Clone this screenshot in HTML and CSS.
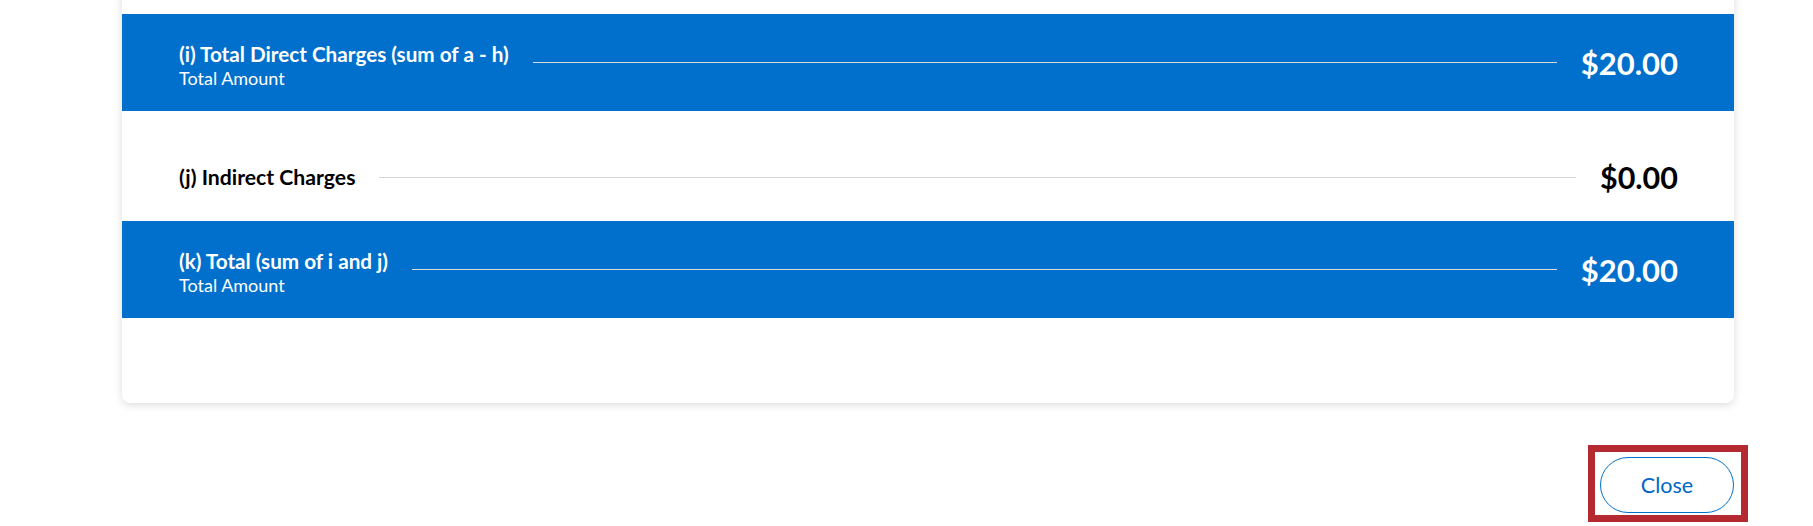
FILE: index.html
```html
<!DOCTYPE html>
<html lang="en">
<head>
<meta charset="utf-8">
<title>Budget Summary</title>
<link rel="stylesheet" href="styles.css">
</head>
<body>
<main class="page">
  <section class="card">
    <div class="row row-total">
      <div class="label">
        <div class="title">(i) Total Direct Charges (sum of a - h)</div>
        <div class="sub">Total Amount</div>
      </div>
      <div class="leader"></div>
      <div class="amount">$20.00</div>
    </div>
    <div class="row row-plain">
      <div class="label">
        <div class="title">(j) Indirect Charges</div>
      </div>
      <div class="leader"></div>
      <div class="amount">$0.00</div>
    </div>
    <div class="row row-total">
      <div class="label">
        <div class="title">(k) Total (sum of i and j)</div>
        <div class="sub">Total Amount</div>
      </div>
      <div class="leader"></div>
      <div class="amount">$20.00</div>
    </div>
  </section>
  <div class="actions">
    <div class="highlight">
      <button class="btn-close" type="button">Close</button>
    </div>
  </div>
</main>
</body>
</html>
```
FILE: styles.css
```css
* { box-sizing: border-box; }
html, body {
  margin: 0;
  padding: 0;
  background: #ffffff;
  font-family: Lato, "Open Sans", "Liberation Sans", sans-serif;
  overflow: hidden;
}
.page {
  padding: 0 79px 0 122px;
}
.card {
  margin-top: -30px;
  padding: 44px 0 85px;
  background: #ffffff;
  border-radius: 0 0 8px 8px;
  box-shadow: 0 2px 8px rgba(0, 0, 0, 0.14);
}
.row {
  display: flex;
  align-items: center;
  gap: 24px;
  padding: 0 56px 0 57px;
}
.row-total {
  height: 97px;
  background: #0070cc;
  color: #ffffff;
}
.row-total + .row-total { height: 96px; }
.row-plain {
  height: 110px;
  padding-top: 22px;
  color: #000000;
}
.title {
  font-size: 20.7px;
  font-weight: 700;
  line-height: 26px;
  white-space: nowrap;
}
.row-plain .title { font-size: 21.2px; }
.row-total .label { padding-top: 4px; }
.sub {
  font-size: 18px;
  font-weight: 400;
  line-height: 22px;
  white-space: nowrap;
}
.leader {
  flex: 1;
  height: 1px;
  background: #d3d3d8;
}
.row-total .leader { background: #d9d9d9; }
.amount {
  font-size: 31px;
  font-weight: 700;
  line-height: 36px;
  white-space: nowrap;
}
.row-plain .amount { font-size: 30.5px; }
.actions {
  display: flex;
  justify-content: flex-end;
  padding-top: 42px;
  margin-right: -14px;
}
.highlight {
  border: 7px solid #b52a30;
  padding: 5px 7px 2px 5px;
}
.btn-close {
  display: block;
  width: 134px;
  height: 56px;
  border: 1px solid #0070cc;
  border-radius: 28px;
  background: #ffffff;
  color: #0068c4;
  font-family: Lato, "Open Sans", "Liberation Sans", sans-serif;
  font-size: 21.5px;
  font-weight: 400;
}
```
